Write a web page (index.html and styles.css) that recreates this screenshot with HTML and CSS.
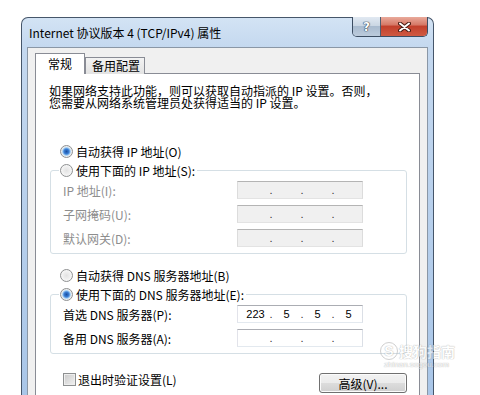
FILE: index.html
```html
<!DOCTYPE html>
<html lang="zh-CN">
<head>
    <meta charset="UTF-8">
    <meta name="viewport" content="width=device-width, initial-scale=1.0">
    <title>Internet 协议版本 4 (TCP/IPv4) 属性</title>
    <link rel="stylesheet" href="styles.css">
</head>
<body>

    <div class="window">
        <div class="titlebar">
            <span class="title">Internet 协议版本 4 (TCP/IPv4) 属性</span>
            <div class="controls">
                <span class="ctl help">?</span>
                <span class="ctl close">
                    <svg width="13" height="10" viewBox="0 0 13 10">
                        <path d="M2 1.5 L11 8.5 M11 1.5 L2 8.5" stroke="#4a1d14" stroke-width="4" stroke-linecap="round"/>
                        <path d="M2 1.5 L11 8.5 M11 1.5 L2 8.5" stroke="#fff" stroke-width="2" stroke-linecap="round"/>
                    </svg>
                </span>
            </div>
        </div>

        <div class="client">
            <div class="tabs">
                <span class="tab active">常规</span>
                <span class="tab">备用配置</span>
            </div>

            <div class="panel">
                <p class="intro">如果网络支持此功能，则可以获取自动指派的 IP 设置。否则，<br>您需要从网络系统管理员处获得适当的 IP 设置。</p>

                <label class="radio top checked"><span class="dot"></span>自动获得 IP 地址(O)</label>
                <fieldset class="group">
                    <legend><label class="radio"><span class="dot"></span>使用下面的 IP 地址(S):</label></legend>
                    <div class="row disabled">
                        <span class="field-label">IP 地址(I):</span>
                        <span class="ipbox"><i></i><b>.</b><i></i><b>.</b><i></i><b>.</b><i></i></span>
                    </div>
                    <div class="row disabled">
                        <span class="field-label">子网掩码(U):</span>
                        <span class="ipbox"><i></i><b>.</b><i></i><b>.</b><i></i><b>.</b><i></i></span>
                    </div>
                    <div class="row disabled">
                        <span class="field-label">默认网关(D):</span>
                        <span class="ipbox"><i></i><b>.</b><i></i><b>.</b><i></i><b>.</b><i></i></span>
                    </div>
                </fieldset>

                <label class="radio dns"><span class="dot"></span>自动获得 DNS 服务器地址(B)</label>
                <fieldset class="group">
                    <legend><label class="radio checked"><span class="dot"></span>使用下面的 DNS 服务器地址(E):</label></legend>
                    <div class="row">
                        <span class="field-label">首选 DNS 服务器(P):</span>
                        <span class="ipbox"><i>223</i><b>.</b><i>5</i><b>.</b><i>5</i><b>.</b><i>5</i></span>
                    </div>
                    <div class="row">
                        <span class="field-label">备用 DNS 服务器(A):</span>
                        <span class="ipbox"><i></i><b>.</b><i></i><b>.</b><i></i><b>.</b><i></i></span>
                    </div>
                </fieldset>

                <div class="footer">
                    <label class="check"><span class="box"></span>退出时验证设置(L)</label>
                    <button class="btn">高级(V)...</button>
                </div>
            </div>
        </div>
    </div>

    <div class="watermark">
        <div class="wm-name"><span class="wm-logo">S</span>搜狗指南</div>
        <div class="wm-url">zhinan.sogou.com</div>
    </div>

</body>
</html>
```

FILE: styles.css
```css
body {
    margin: 0;
    height: 395px;
    overflow: hidden;
    position: relative;
    background: #fff;
    font-family: "Noto Sans CJK SC", sans-serif;
    font-size: 12px;
    color: #000;
}
.window {
    box-sizing: border-box;
    width: 413px;
    height: 378px;
    margin: 17px 0 0 21px;
    padding: 0 5px;
    border: 1px solid #46566a;
    border-bottom: none;
    border-radius: 7px 7px 0 0;
    background: linear-gradient(to bottom, #d3e3f4 0, #c4d8ef 30px, #a9c6e8 100%);
}
.titlebar {
    height: 29px;
    display: flex;
    justify-content: space-between;
    align-items: flex-start;
}
.title {
    padding-left: 2px;
    line-height: 29px;
    font-size: 12px;
    color: #000;
}
.controls {
    display: flex;
    margin-top: -1px;
    border: 1px solid #3c4d62;
    border-top: none;
    border-radius: 0 0 5px 5px;
    overflow: hidden;
}
.ctl {
    height: 19px;
    display: flex;
    align-items: center;
    justify-content: center;
}
.help {
    width: 27px;
    border-right: 1px solid #4d5d70;
    background: linear-gradient(to bottom, #e1e9f2 0, #cbd7e4 45%, #a9bbcf 50%, #bccbdc 100%);
    color: #fff;
    font-family: "DejaVu Sans", sans-serif;
    font-weight: bold;
    font-size: 12px;
    text-shadow: 0 0 1px #2a3a4c, 0 0 1px #2a3a4c, 0 0 1px #2a3a4c;
}
.close {
    width: 46px;
    background: linear-gradient(to bottom, #e9aa9b 0, #d67a68 40%, #c2402c 50%, #d05a42 100%);
}
.client {
    box-sizing: border-box;
    height: 349px;
    padding: 5px 7px 0;
    border: 1px solid #8a97a6;
    border-bottom: none;
    background: #f0f0f0;
}
.tabs {
    display: flex;
    align-items: flex-end;
    margin-bottom: -1px;
    position: relative;
}
.tab {
    height: 16px;
    line-height: 16px;
    padding: 0 4px 0 6px;
    border: 1px solid #898c95;
    border-bottom: none;
    background: linear-gradient(to bottom, #f3f3f3, #e3e3e3);
}
.tab.active {
    height: 20px;
    line-height: 20px;
    padding: 0 12px;
    background: #fff;
}
.panel {
    box-sizing: border-box;
    height: 323px;
    border: 1px solid #898c95;
    border-bottom: none;
    background: #fff;
}
.intro {
    margin: 11px 13px 0;
    line-height: 12px;
}
.radio {
    display: flex;
    align-items: center;
    gap: 3px;
    height: 19px;
}
.radio.top {
    margin: 33px 0 0 24px;
}
.radio.dns {
    margin: 12px 0 0 24px;
}
.dot {
    box-sizing: border-box;
    width: 13px;
    height: 13px;
    border-radius: 50%;
    border: 1px solid #8e9091;
    background: radial-gradient(circle, #e2e2e2 0, #f8f8f8 6px);
}
.checked .dot {
    background: radial-gradient(circle closest-side, #1b4f9f 0, #3a7fd6 2.5px, #a9d3f5 4px, #e4e8ec 4.6px, #f6f6f6 6px);
}
.group {
    margin: 0 12px 0 14px;
    padding: 1px 12px 6px;
    border: 1px solid #d5dfe5;
    border-radius: 3px;
}
.group legend {
    margin-left: -4px;
    padding: 0 2px 0 1px;
}
.row {
    display: flex;
    align-items: center;
    height: 18px;
    margin-bottom: 6px;
}
.row:last-child {
    margin-bottom: 0;
}
.field-label {
    width: 174px;
}
.row.disabled .field-label {
    color: #8d8d8d;
}
.ipbox {
    box-sizing: border-box;
    display: flex;
    width: 126px;
    height: 18px;
    padding-left: 4px;
    border: 1px solid;
    border-color: #abadb3 #dbdfe6 #e3e9ef #e2e3ea;
    background: #fff;
    font-family: "Liberation Sans", sans-serif;
    font-size: 11px;
    line-height: 16px;
}
.row.disabled .ipbox {
    border-color: #b4b4b4 #dcdcdc #e3e3e3 #dcdcdc;
    background: #f0f0f0;
}
.ipbox i {
    width: 27px;
    font-style: normal;
    text-align: center;
}
.ipbox b {
    width: 4px;
    font-weight: normal;
    text-align: center;
    color: #333;
}
.footer {
    display: flex;
    justify-content: space-between;
    align-items: flex-start;
    margin: 18px 12px 0 27px;
}
.check {
    display: flex;
    align-items: center;
    gap: 2px;
    height: 14px;
}
.box {
    box-sizing: border-box;
    width: 13px;
    height: 13px;
    border: 1px solid #8e9091;
    background: linear-gradient(135deg, #c9c9c9, #f2f2f2);
    box-shadow: inset 0 0 0 1px #eeeeee;
}
.btn {
    box-sizing: border-box;
    width: 88px;
    height: 20px;
    margin-top: 1px;
    padding: 0;
    border: 1px solid #707070;
    border-radius: 3px;
    background: linear-gradient(to bottom, #f2f2f2 0, #ebebeb 50%, #dddddd 50%, #cfcfcf 100%);
    box-shadow: inset 0 0 0 1px #fbfbfb;
    font-family: "Noto Sans CJK SC", sans-serif;
    font-size: 12px;
    color: #000;
}
.watermark {
    position: absolute;
    left: 380px;
    top: 342px;
    color: #fff;
    opacity: 0.55;
    text-shadow: 0 0 1px #888, 0 0 1px #888;
}
.wm-name {
    display: flex;
    align-items: center;
    gap: 1px;
    font-size: 14px;
    font-weight: bold;
    line-height: 18px;
}
.wm-logo {
    width: 16px;
    height: 16px;
    border-radius: 50%;
    border: 1px solid #aaa;
    text-align: center;
    line-height: 16px;
    font-family: "Liberation Sans", sans-serif;
}
.wm-url {
    font-family: "Liberation Sans", sans-serif;
    font-size: 8px;
    line-height: 10px;
    padding-left: 4px;
}
```
